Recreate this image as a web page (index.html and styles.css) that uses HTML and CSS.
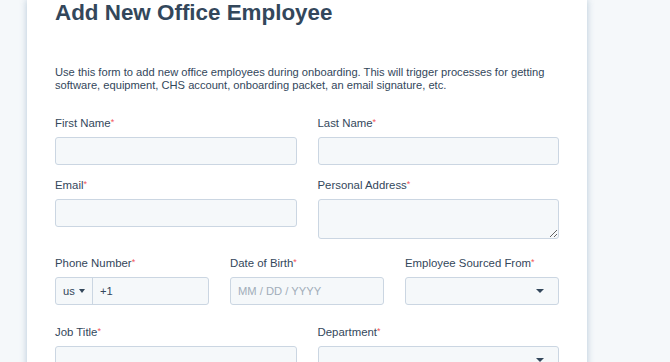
FILE: index.html
```html
<!DOCTYPE html>
<html>
<head>
<meta charset="utf-8">
<link rel="stylesheet" href="styles.css">
</head>
<body>
<div class="page">
  <div class="card">
    <h1 class="title">Add New Office Employee</h1>
    <p class="desc">Use this form to add new office employees during onboarding. This will trigger processes for getting software, equipment, CHS account, onboarding packet, an email signature, etc.</p>

    <div class="row row-2 r1">
      <div class="field">
        <label class="label">First Name<span class="req">*</span></label>
        <input class="input" type="text">
      </div>
      <div class="field">
        <label class="label">Last Name<span class="req">*</span></label>
        <input class="input" type="text">
      </div>
    </div>

    <div class="row row-2 r2">
      <div class="field">
        <label class="label">Email<span class="req">*</span></label>
        <input class="input" type="text">
      </div>
      <div class="field">
        <label class="label">Personal Address<span class="req">*</span></label>
        <textarea class="input textarea"></textarea>
      </div>
    </div>

    <div class="row row-3 r3">
      <div class="field">
        <label class="label">Phone Number<span class="req">*</span></label>
        <div class="phone">
          <div class="country">us
            <svg class="caret-sm" width="6" height="4" viewBox="0 0 6 4"><path d="M0 0H6L3 4Z" fill="#33475b"/></svg>
          </div>
          <div class="phone-num">+1</div>
        </div>
      </div>
      <div class="field">
        <label class="label">Date of Birth<span class="req">*</span></label>
        <div class="input fake"><span class="placeholder">MM / DD / YYYY</span></div>
      </div>
      <div class="field">
        <label class="label">Employee Sourced From<span class="req">*</span></label>
        <div class="input select">
          <svg width="8" height="4" viewBox="0 0 8 4"><path d="M0 0H8L4 4Z" fill="#33475b"/></svg>
        </div>
      </div>
    </div>

    <div class="row row-2 r4">
      <div class="field">
        <label class="label">Job Title<span class="req">*</span></label>
        <input class="input" type="text">
      </div>
      <div class="field">
        <label class="label">Department<span class="req">*</span></label>
        <div class="input select">
          <svg width="8" height="4" viewBox="0 0 8 4"><path d="M0 0H8L4 4Z" fill="#33475b"/></svg>
        </div>
      </div>
    </div>
  </div>
</div>
</body>
</html>
```

FILE: styles.css
```css
html, body {
  margin: 0;
  padding: 0;
  height: 362px;
  overflow: hidden;
}
body {
  background: #f5f8fa;
  font-family: "Liberation Sans", Arial, sans-serif;
  color: #33475b;
}
.page {
  padding-left: 27px;
}
.card {
  width: 504px;
  min-height: 420px;
  background: #ffffff;
  padding: 0 28px;
  box-shadow: 0 0 7px rgba(80, 120, 160, 0.38);
}
.title {
  margin: 0;
  font-size: 22.4px;
  line-height: 26px;
  font-weight: 700;
  color: #33475b;
}
.desc {
  margin: 40px 0 0;
  font-size: 11.15px;
  line-height: 13px;
  color: #33475b;
}
.row {
  display: grid;
  column-gap: 21px;
  align-items: start;
}
.row-2 { grid-template-columns: 1fr 1fr; }
.row-3 { grid-template-columns: 1fr 1fr 1fr; }
.r1 { margin-top: 23px; }
.r2 { margin-top: 12px; }
.r3 { margin-top: 16px; }
.r4 { margin-top: 19px; }
.field {
  display: flex;
  flex-direction: column;
}
.label {
  font-size: 11.4px;
  line-height: 14px;
  margin-bottom: 7px;
  color: #33475b;
}
.req {
  color: #f2545b;
  font-size: 9px;
  vertical-align: 2px;
}
.input {
  box-sizing: border-box;
  width: 100%;
  height: 28px;
  margin: 0;
  background: #f5f8fa;
  border: 1px solid #cbd6e2;
  border-radius: 3px;
  font-family: "Liberation Sans", Arial, sans-serif;
  font-size: 11.2px;
  color: #33475b;
  padding: 0 7px;
}
.textarea {
  height: 40px;
  display: block;
  resize: vertical;
}
.fake {
  display: flex;
  align-items: center;
}
.placeholder {
  color: #a1adb9;
}
.select {
  display: flex;
  align-items: center;
  justify-content: flex-end;
  padding-right: 14px;
}
.phone {
  display: flex;
  box-sizing: border-box;
  height: 28px;
  background: #f5f8fa;
  border: 1px solid #cbd6e2;
  border-radius: 3px;
  font-size: 11.2px;
  color: #33475b;
}
.country {
  width: 37px;
  box-sizing: border-box;
  display: flex;
  align-items: center;
  gap: 4px;
  padding-left: 7px;
  border-right: 1px solid #cbd6e2;
}
.phone-num {
  display: flex;
  align-items: center;
  padding-left: 7px;
}
```
